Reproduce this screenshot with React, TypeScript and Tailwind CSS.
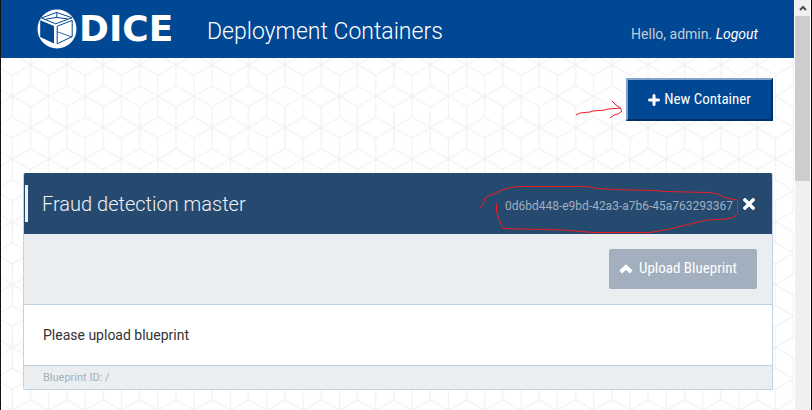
import React from "react";

function HexBackground() {
  return (
    <svg className="absolute inset-0 h-full w-full" aria-hidden="true">
      <defs>
        <pattern id="cubes" width="36.33" height="62.8" x="29.6" y="64.8" patternUnits="userSpaceOnUse">
          <path
            d="M0 0L18.165 10.47L36.33 0M0 0V20.93L18.165 31.4L36.33 20.93V0M18.165 10.47V52.33M18.165 31.4L0 41.87V62.8L18.165 52.33L36.33 62.8V41.87L18.165 31.4"
            fill="none"
            stroke="#f1f1f1"
            strokeWidth="1.2"
          />
        </pattern>
      </defs>
      <rect width="100%" height="100%" fill="url(#cubes)" />
    </svg>
  );
}

function DiceLogo() {
  return (
    <svg className="h-10 w-10 shrink-0" viewBox="0 0 40 40" aria-hidden="true">
      <circle cx="20" cy="20" r="19.5" fill="#fff" />
      <path d="M3.2 11.2L17 17V34.6L3.2 28z" fill="#004794" />
      <g fill="none" stroke="#004794" strokeWidth="1">
        <path d="M4.6 9L19.6 3.4L35 8.8L18.6 14.8z" />
        <path d="M19.8 3.4V8.2M19.8 8.4L8.5 10.2M19.8 8.4L31 10" />
        <path d="M20.2 17.2L35.2 11.4V27.6L20.2 34.8z" />
        <path d="M20.4 22.8L35 28" strokeWidth="0.8" />
      </g>
    </svg>
  );
}

function PlusIcon() {
  return (
    <svg className="h-3 w-3" viewBox="0 0 12 12" aria-hidden="true">
      <path d="M6 1.5V10.5M1.5 6H10.5" stroke="currentColor" strokeWidth="3" strokeLinecap="round" />
    </svg>
  );
}

function ChevronIcon() {
  return (
    <svg className="h-3 w-3.5" viewBox="0 0 14 12" aria-hidden="true">
      <path d="M1.8 9L7 4L12.2 9" fill="none" stroke="currentColor" strokeWidth="4" />
    </svg>
  );
}

function CloseIcon() {
  return (
    <svg className="h-3 w-3" viewBox="0 0 12 12" aria-hidden="true">
      <path d="M2 2L10 10M10 2L2 10" stroke="currentColor" strokeWidth="3.4" strokeLinecap="square" />
    </svg>
  );
}

function Annotations() {
  return (
    <svg className="pointer-events-none absolute top-0 right-0 h-[410px] w-[812px]" viewBox="0 0 812 410" aria-hidden="true">
      <g fill="none" stroke="#ed1c24" strokeWidth="1">
        <path d="M576 115L580 113L590 112L593 111L605 110L608 109L621 108M612 101L616 105L619 107L622 111L618 114L614 115L610 118" />
        <path d="M480 208L483 205L485 198L490 195L496 193L502 190L509 188L517 186.500H587L597 188.500L615 189.500L655 190.500L663 191.500L710 192.500L718 194L723 197L731 199L737.500 200V213L734 217L727 219L707 220L690 224L670 229L650 232.500H593L563 230L503 228.500L499 219L496.500 212V204" />
      </g>
    </svg>
  );
}

function ScrollBar() {
  return (
    <div className="flex w-[18px] shrink-0 justify-center border-r border-black bg-white" aria-hidden="true">
      <div className="w-[15px] bg-[#f0f0f0]">
        <div className="flex h-4 items-center justify-center">
          <svg className="h-2 w-2" viewBox="0 0 8 8">
            <path d="M1 6L4 3L7 6" fill="none" stroke="#505050" strokeWidth="2" />
          </svg>
        </div>
        <div className="h-[165px] bg-[#cdcdcd]" />
      </div>
    </div>
  );
}

export default function App() {
  return (
    <div className="relative flex min-h-screen overflow-hidden bg-white font-['Roboto','Liberation_Sans',sans-serif] text-sm">
      <div className="relative min-w-0 flex-1 border-l border-[#111]">
        <HexBackground />
        <header className="relative flex h-[58px] items-center bg-[#004794] pr-9 pl-9 text-white">
          <DiceLogo />
          <span className="w-[130px] pl-0.5 font-['DejaVu_Sans',sans-serif] text-4xl leading-10 font-bold">DICE</span>
          <h1 className="pt-1.5 text-[23px] font-light">Deployment Containers</h1>
          <p className="mt-2.5 ml-auto text-[#c5cdd6]">
            Hello, admin.{" "}
            <a href="#logout" className="text-white italic">
              Logout
            </a>
          </p>
        </header>

        <main className="relative pt-5 pr-[21px] pl-[22px]">
          <div className="flex justify-end">
            <button
              type="button"
              className="flex h-[43px] w-[147px] items-center justify-center gap-1 border-2 border-t-[#7fa3c9] border-r-[#003065] border-b-[#003065] border-l-[#7fa3c9] bg-[#004794] font-['Roboto_Condensed','Liberation_Sans_Narrow',sans-serif] text-[15px] text-white"
            >
              <PlusIcon />
              New Container
            </button>
          </div>

          <section className="mt-[52px] overflow-hidden rounded-xs border border-t-0 border-[#bfd3e2] bg-white">
            <div className="-mx-px flex h-[61px] items-center bg-[#26496f] pr-[18px] pl-0.5 text-white">
              <div className="h-[37px] w-[3px] bg-[#eef2f5]" />
              <h2 className="ml-3.5 text-xl font-light text-[#eef2f5]">Fraud detection master</h2>
              <span className="mt-1 ml-auto text-xs text-[#9fb0c1]">0d6bd448-e9bd-42a3-a7b6-45a763293367</span>
              <button type="button" aria-label="Remove container" className="ml-2.5">
                <CloseIcon />
              </button>
            </div>
            <div className="flex h-[71px] items-center justify-end border-b border-[#bfd3e2] bg-[#eaeef1] pr-[15px]">
              <button
                type="button"
                className="flex h-10 w-[148px] items-center gap-1.5 rounded-xs bg-[#a2afbe] pl-2.5 font-['Roboto_Condensed','Liberation_Sans_Narrow',sans-serif] text-[15px] text-white"
              >
                <ChevronIcon />
                Upload Blueprint
              </button>
            </div>
            <p className="flex h-[60px] items-center px-[19px] text-[#333]">Please upload blueprint</p>
            <p className="flex h-6 items-center border-t border-[#bfd3e2] bg-[#eaeef1] px-[19px] text-[11px] text-[#a2afbe]">
              Blueprint ID: /
            </p>
          </section>
        </main>
      </div>
      <ScrollBar />
      <Annotations />
    </div>
  );
}
